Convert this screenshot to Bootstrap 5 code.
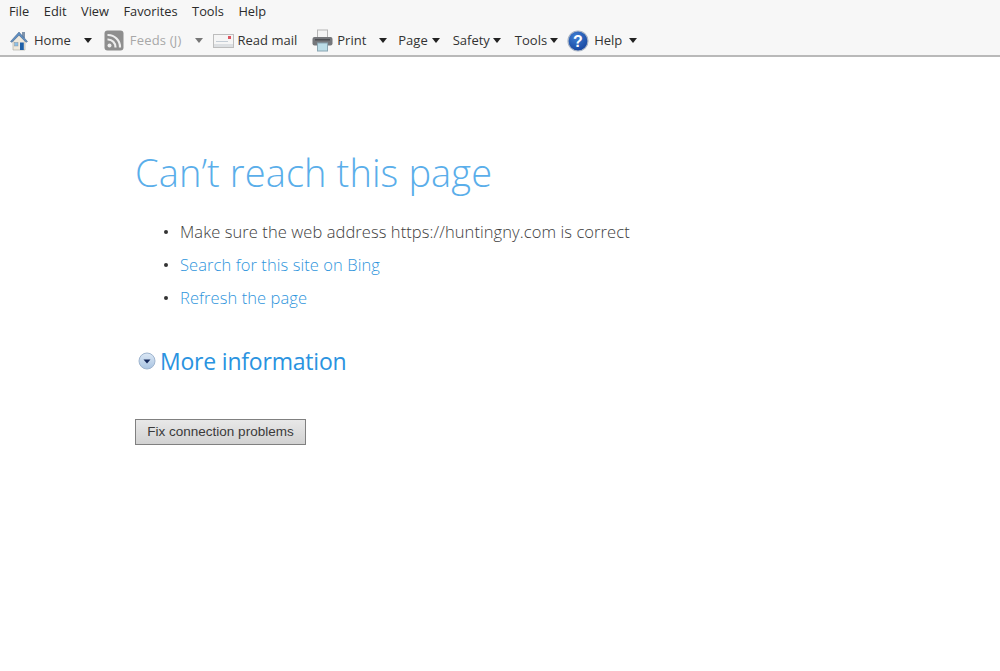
<!DOCTYPE html>
<html lang="en">
<head>
<meta charset="utf-8">
<title>Can't reach this page</title>
<link href="https://cdn.jsdelivr.net/npm/bootstrap@5.3.0/dist/css/bootstrap.min.css" rel="stylesheet">
<style>
html,body{height:100%;}
body{background:#fff;font-family:"Open Sans","Noto Sans",sans-serif;color:#333;overflow:hidden;}
.chrome-bar{height:57px;background:#f7f7f7;border-bottom:2px solid #b9b9b9;font-size:13px;color:#2b2b2b;padding-left:9px;}
.menu-row{height:24px;gap:14.5px;font-size:12.8px;}
.tool-row{height:30px;margin-top:1px;padding-top:1px;}
.tool-item{color:#333;white-space:nowrap;}
.tool-item svg{flex:none;}
.is-muted{color:#a8a8a8;}
.caret-mark{width:0;height:0;border-left:4.5px solid transparent;border-right:4.5px solid transparent;border-top:5px solid #222;flex:none;}
.caret-soft{border-top-color:#777;}
.home-caret{margin-left:13px;}
.feeds-item{margin-left:12px;}
.feeds-label{margin-left:6px;letter-spacing:.2px;}
.feeds-caret{margin-left:13px;}
.mail-item{margin-left:10px;}
.mail-label{margin-left:4px;}
.print-item{margin-left:15px;}
.print-label{margin-left:4px;}
.print-caret{margin-left:13px;}
.page-item{margin-left:11px;}
.safety-item{margin-left:13px;gap:3px;}
.tools-item{margin-left:14px;gap:3px;}
.help-item{margin-left:9px;}
.help-label{margin-left:5px;}
.help-caret{margin-left:7px;}
.page-body{padding:90px 0 0 135px;}
.page-title{font-family:"Open Sans",sans-serif;font-weight:300;font-size:38px;line-height:50px;color:#5aaeea;margin:0 0 18px;letter-spacing:.1px;}
.hint-list{list-style:none;margin:0;padding:0 0 0 29px;font-weight:300;font-size:16.5px;letter-spacing:.08px;}
.hint-list li{height:33px;line-height:33px;display:flex;align-items:center;gap:12px;color:#3d3d3d;}
.hint-list li::before{content:"";width:4px;height:4px;background:#333;border-radius:50%;flex:none;}
.hint-list a{color:#2f95dc;text-decoration:none;}
.more-row{margin:29px 0 0 3px;gap:4px;height:36px;}
.more-row a{font-size:23px;font-weight:400;color:#2a93e0;text-decoration:none;letter-spacing:-.2px;}
.fix-btn{margin-top:40px;width:171px;height:26px;padding:1px 0 0;border:1px solid #808080;border-radius:0;background:linear-gradient(#e8e8e8,#d2d2d2);color:#3a3a3a;font-family:"Liberation Sans",sans-serif;font-size:13.5px;display:block;}
</style>
</head>
<body>
<div class="chrome-bar">
  <div class="menu-row d-flex align-items-center">
    <span>File</span><span>Edit</span><span>View</span><span>Favorites</span><span>Tools</span><span>Help</span>
  </div>
  <div class="tool-row d-flex align-items-center">
    <div class="tool-item d-flex align-items-center">
      <svg width="21" height="21" viewBox="0 0 21 21"><rect x="13" y="2" width="3" height="6" fill="#7f93ab"/><path d="M4 10.500 10 5l6 5.500V20H4z" fill="#f0e9dc" stroke="#a9a79f" stroke-width=".6"/><path d="M1.500 11.500 10 2l8.500 9.500-1.500.8L10 5.200 3 12.300z" fill="#5f8fc2" stroke="#3f5f86" stroke-width=".5"/><rect x="11" y="12.500" width="3.800" height="7.500" fill="#1d5fa8"/><rect x="5.500" y="12.500" width="3.500" height="3.500" fill="#8dc0e6" stroke="#7d8a96" stroke-width=".4"/></svg>
      <span class="ms-1">Home</span>
      <span class="caret-mark home-caret"></span>
    </div>
    <div class="tool-item d-flex align-items-center is-muted feeds-item">
      <svg width="20" height="21" viewBox="0 0 20 21"><rect x=".5" y=".5" width="19" height="20" rx="3" fill="#8e8e8e"/><circle cx="5.500" cy="15.500" r="2" fill="#eee"/><path d="M3.500 9.500a7.500 7.500 0 0 1 8 8M3.500 5a12 12 0 0 1 12.500 12.500" fill="none" stroke="#eee" stroke-width="2.200"/></svg>
      <span class="feeds-label">Feeds (J)</span>
      <span class="caret-mark caret-soft feeds-caret"></span>
    </div>
    <div class="tool-item d-flex align-items-center mail-item">
      <svg width="21" height="16" viewBox="0 0 21 16"><rect x=".5" y="1.500" width="20" height="13" fill="#f5f5f5" stroke="#bdbdbd"/><rect x="1" y="11" width="19" height="3" fill="#dcdfe2"/><rect x="3" y="8" width="12" height="1" fill="#c3ccd5"/><rect x="15" y="3" width="3" height="3" fill="#dc5560"/></svg>
      <span class="mail-label">Read mail</span>
    </div>
    <div class="tool-item d-flex align-items-center print-item">
      <svg width="21" height="23" viewBox="0 0 21 23"><rect x="5.500" y="1" width="10" height="8" fill="#f4f4f4" stroke="#b5b5b5"/><rect x=".5" y="8" width="20" height="8.500" rx="2" fill="#75777b"/><rect x="3" y="10" width="15" height="1.500" fill="#4d4f53"/><rect x="5.500" y="14" width="10" height="8" fill="#bcdde8" stroke="#8aa6b3"/></svg>
      <span class="print-label">Print</span>
      <span class="caret-mark print-caret"></span>
    </div>
    <div class="tool-item d-flex align-items-center gap-1 page-item"><span>Page</span><span class="caret-mark"></span></div>
    <div class="tool-item d-flex align-items-center safety-item"><span>Safety</span><span class="caret-mark"></span></div>
    <div class="tool-item d-flex align-items-center tools-item"><span>Tools</span><span class="caret-mark"></span></div>
    <div class="tool-item d-flex align-items-center help-item">
      <svg width="22" height="22" viewBox="0 0 22 22"><defs><radialGradient id="helpFill" cx=".4" cy=".3" r=".8"><stop offset="0" stop-color="#3f7fd4"/><stop offset="1" stop-color="#123f99"/></radialGradient></defs><circle cx="11" cy="11" r="10" fill="url(#helpFill)" stroke="#a9b4c4" stroke-width="1.200"/><text x="11" y="16.500" text-anchor="middle" font-family="Liberation Sans, sans-serif" font-size="16" font-weight="700" fill="#fff">?</text></svg>
      <span class="help-label">Help</span>
      <span class="caret-mark help-caret"></span>
    </div>
  </div>
</div>
<main class="page-body">
  <h1 class="page-title">Can’t reach this page</h1>
  <ul class="hint-list">
    <li><span>Make sure the web address https://huntingny.com is correct</span></li>
    <li><a href="#">Search for this site on Bing</a></li>
    <li><a href="#">Refresh the page</a></li>
  </ul>
  <div class="more-row d-flex align-items-center">
    <svg width="18" height="18" viewBox="0 0 18 18"><defs><linearGradient id="moreFill" x1="0" y1="0" x2="0" y2="1"><stop offset="0" stop-color="#dce8f5"/><stop offset="1" stop-color="#a9c4e2"/></linearGradient></defs><circle cx="9" cy="9" r="8" fill="url(#moreFill)" stroke="#9fb5cf"/><path d="M5.500 7.500h7L9 11.500z" fill="#14285a"/></svg>
    <a href="#">More information</a>
  </div>
  <button type="button" class="btn fix-btn">Fix connection problems</button>
</main>
<script src="https://cdn.jsdelivr.net/npm/bootstrap@5.3.0/dist/js/bootstrap.bundle.min.js"></script>
</body>
</html>
